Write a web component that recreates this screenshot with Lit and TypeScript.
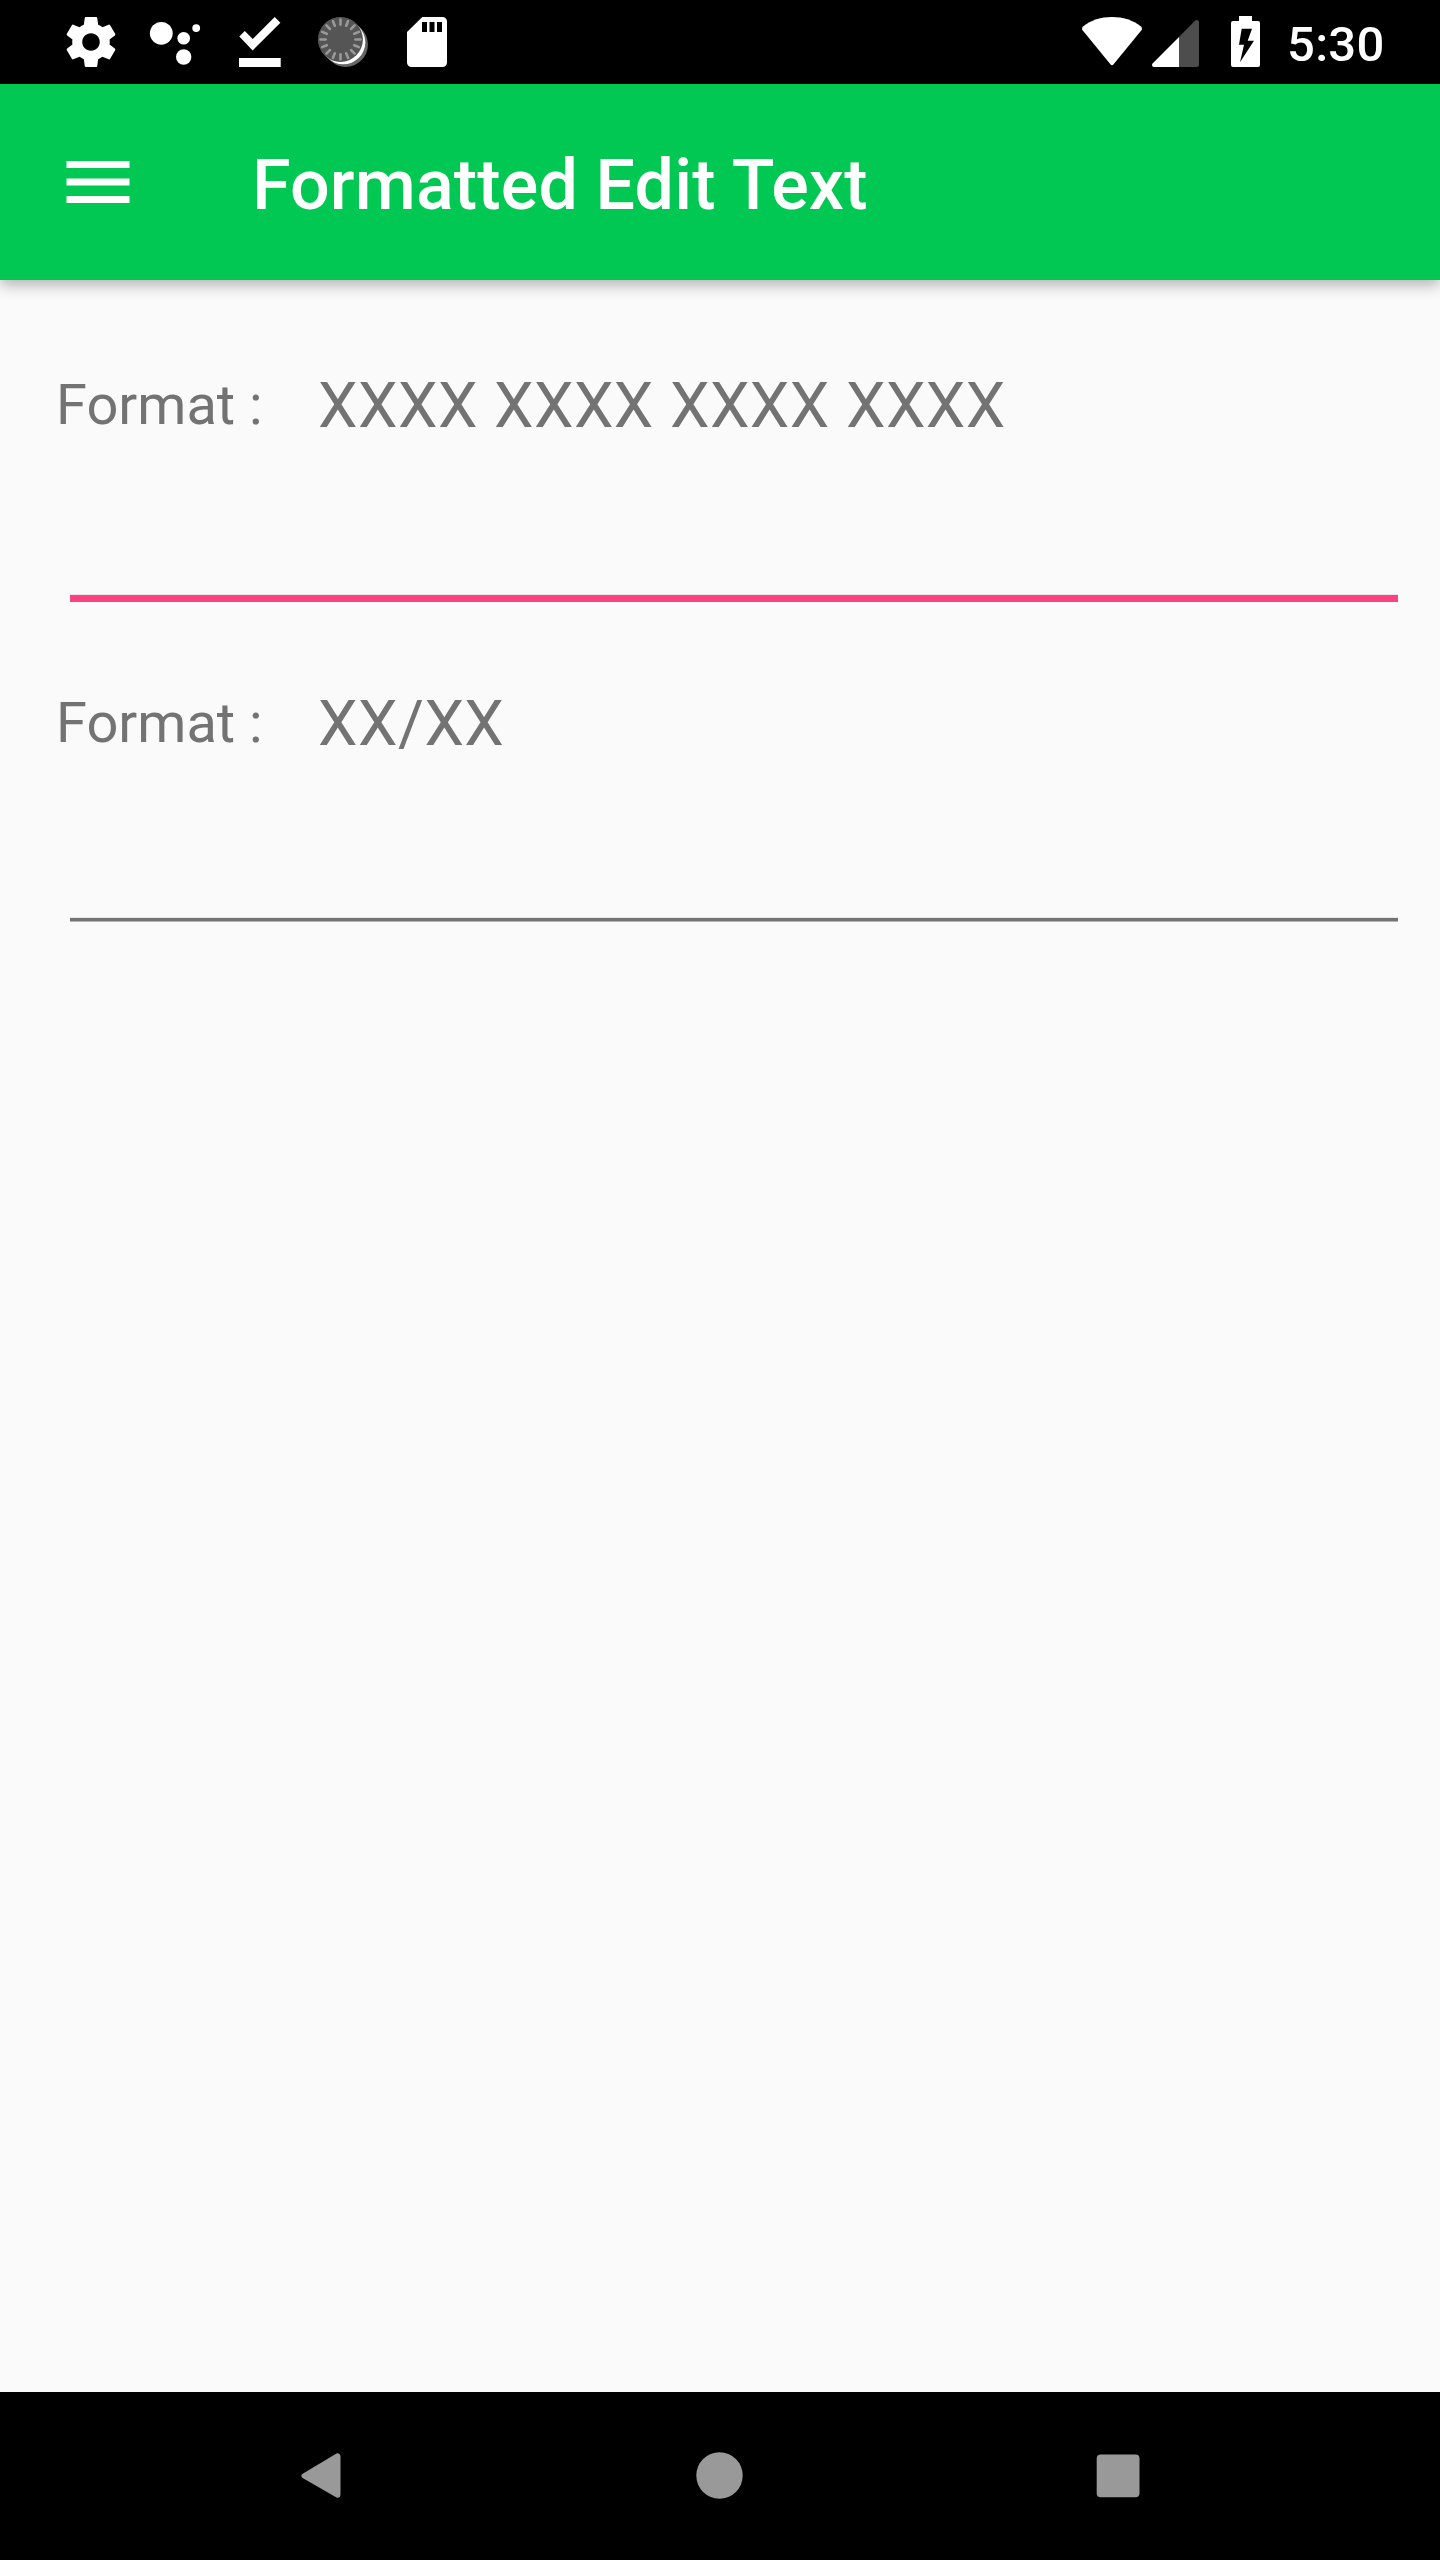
import { LitElement, html, css, svg } from "lit";
import { customElement, property } from "lit/decorators.js";

const ticks = Array.from({ length: 16 }, (_, i) => i * 22.5);

@customElement("status-bar")
class StatusBar extends LitElement {
  static styles = css`
    :host {
      display: flex;
      justify-content: space-between;
      height: 84px;
      background: #000;
      color: #fff;
    }
    .group {
      display: flex;
      height: 84px;
    }
    .notifications {
      padding-left: 49px;
    }
    .system {
      padding-right: 56px;
    }
    svg {
      display: block;
      fill: #fff;
    }
    .signal {
      margin-left: 10px;
    }
    .battery {
      margin-left: 32px;
    }
    .time {
      margin-left: 27px;
      width: 97px;
      white-space: nowrap;
      font-size: 49px;
      font-weight: 500;
      line-height: 90px;
      letter-spacing: 0.3px;
    }
  `;

  render() {
    return html`
      <div class="group notifications">
        <svg width="84" height="84" viewBox="0 0 84 84">
          <path
            transform="translate(12 12) scale(2.5)"
            d="M19.43 12.98c.04-.32.07-.64.07-.98s-.03-.66-.07-.98l2.11-1.65c.19-.15.24-.42.12-.64l-2-3.46c-.12-.22-.39-.3-.61-.22l-2.49 1c-.52-.4-1.08-.73-1.69-.98l-.38-2.65C14.46 2.18 14.25 2 14 2h-4c-.25 0-.46.18-.49.42l-.38 2.65c-.61.25-1.17.59-1.69.98l-2.49-1c-.23-.09-.49 0-.61.22l-2 3.46c-.13.22-.07.49.12.64l2.11 1.65c-.04.32-.07.65-.07.98s.03.66.07.98l-2.11 1.65c-.19.15-.24.42-.12.64l2 3.46c.12.22.39.3.61.22l2.49-1c.52.4 1.08.73 1.69.98l.38 2.65c.03.24.24.42.49.42h4c.25 0 .46-.18.49-.42l.38-2.65c.61-.25 1.17-.59 1.69-.98l2.49 1c.23.09.49 0 .61-.22l2-3.46c.12-.22.07-.49-.12-.64l-2.11-1.65zM12 15.5c-1.93 0-3.5-1.57-3.5-3.5s1.57-3.5 3.5-3.5 3.5 1.57 3.5 3.5-1.57 3.5-3.5 3.5z"
          />
        </svg>
        <svg width="84" height="84" viewBox="0 0 84 84">
          <circle cx="28.3" cy="33.3" r="11.4" />
          <circle cx="50.7" cy="38.3" r="6.3" />
          <circle cx="63.2" cy="28.1" r="3.9" />
          <circle cx="50.7" cy="57" r="7.7" />
        </svg>
        <svg width="84" height="84" viewBox="0 0 84 84">
          <path d="M22.3 36.5L27.8 31L35.7 39L57.7 17L63.4 22.7L35.7 50.4ZM22 58h41.7v9H22Z" />
        </svg>
        <svg width="84" height="84" viewBox="0 0 84 84">
          <path d="M39.5 39.5L44.6 44.6" stroke="#666" stroke-width="44.6" stroke-linecap="round" />
          <circle cx="42.3" cy="42.3" r="22" />
          <circle cx="39.5" cy="39.5" r="22.4" fill="#555" />
          ${ticks.map(
            (a) => svg`<path d="M39.5 19.6v5" stroke="#999" stroke-width="2.6" stroke-linecap="round" transform="rotate(${a} 39.5 39.5)" />`
          )}
        </svg>
        <svg width="84" height="84" viewBox="0 0 84 84">
          <path
            fill-rule="evenodd"
            d="M37.3 17H57.5a4.5 4.5 0 0 1 4.5 4.5V62.5a4.5 4.5 0 0 1-4.5 4.5H26.5a4.5 4.5 0 0 1-4.5-4.5V32ZM37 22v10h5V22ZM44.5 22v10h5V22ZM52 22v10h5V22Z"
          />
        </svg>
      </div>
      <div class="group system">
        <svg width="60" height="84" viewBox="0 0 60 84">
          <path d="M1 26.5C9 20 19 17 30 17S51 20 59 26.5Q60.6 28 59.4 30.3L31.6 64.3Q30 66 28.4 64.3L.6 30.3Q-.6 28 1 26.5Z" />
        </svg>
        <svg class="signal" width="47" height="84" viewBox="0 0 47 84">
          <path fill="#4d4d4d" d="M27 37L42.5 21.2Q44 19.5 46 20.2Q47 20.6 47 22.5V64.5Q47 67 44.5 67H27Z" />
          <path d="M27 37V67H2Q0 67 0 65Q0 64 .8 63.2Z" />
        </svg>
        <svg class="battery" width="29" height="84" viewBox="0 0 29 84">
          <path
            fill-rule="evenodd"
            d="M8 16H21V21H27Q29 21 29 23V65Q29 67 27 67H2Q0 67 0 65V23Q0 21 2 21H8ZM10.7 28.7L8 44.7H13L9 62.3L23 40.7H16.7L21 28.7Z"
          />
        </svg>
        <span class="time">5:30</span>
      </div>
    `;
  }
}

@customElement("format-field")
class FormatField extends LitElement {
  @property() mask = "";
  @property({ type: Boolean }) active = false;

  static styles = css`
    :host {
      display: block;
      height: 318px;
    }
    .caption {
      display: flex;
      align-items: flex-start;
      height: 74px;
      color: #737373;
    }
    .label {
      width: 262px;
      font-size: 56px;
      line-height: 74px;
      white-space: pre;
    }
    .mask {
      font-size: 63px;
      line-height: 76px;
      white-space: nowrap;
      letter-spacing: 0.47px;
    }
    .entry {
      display: flex;
      flex-direction: column;
      height: 148px;
      margin: 14px 42px 0 14px;
    }
    .entry.active {
      height: 146px;
    }
    .value {
      flex: 1;
      min-height: 0;
      width: 100%;
      box-sizing: border-box;
      border: 0;
      padding: 0;
      outline: 0;
      background: none;
      font: 63px Roboto, sans-serif;
    }
    .underline {
      height: 3px;
      background: #737373;
      border-top: 1px solid #e6e6e6;
      border-bottom: 1px solid #b5b5b5;
    }
    .active .underline {
      height: 7px;
      background: #ff4081;
      border-bottom: 0;
    }
  `;

  render() {
    return html`
      <div class="caption">
        <span class="label">Format :</span>
        <span class="mask">${this.mask}</span>
      </div>
      <div class="entry ${this.active ? "active" : ""}">
        <input class="value" type="text" />
        <div class="underline"></div>
      </div>
    `;
  }
}

@customElement("app-root")
class AppRoot extends LitElement {
  static styles = css`
    :host {
      display: flex;
      flex-direction: column;
      width: 1440px;
      height: 2560px;
      overflow: hidden;
      background: #fafafa;
      font-family: Roboto, sans-serif;
    }
    .toolbar {
      display: flex;
      align-items: center;
      height: 196px;
      box-sizing: border-box;
      padding-left: 56px;
      background: #00c853;
      color: #fff;
      box-shadow: 0 5px 14px rgba(0, 0, 0, 0.29);
    }
    .menu {
      display: block;
      fill: #fff;
    }
    .title {
      margin: 6px 0 0 112px;
      font-size: 70px;
      font-weight: 500;
      line-height: 84px;
      letter-spacing: 0.16px;
      white-space: nowrap;
    }
    .content {
      flex: 1;
      padding: 88px 0 0 56px;
    }
    .navigation {
      display: flex;
      align-items: center;
      justify-content: center;
      gap: 315px;
      height: 168px;
      background: #000;
    }
    .navigation svg {
      display: block;
      fill: #999;
    }
  `;

  render() {
    return html`
      <status-bar></status-bar>
      <header class="toolbar">
        <svg class="menu" width="84" height="84" viewBox="0 0 24 24">
          <path d="M3 18h18v-2H3v2zm0-5h18v-2H3v2zm0-7v2h18V6H3z" />
        </svg>
        <div class="title">Formatted Edit Text</div>
      </header>
      <main class="content">
        <format-field mask="XXXX XXXX XXXX XXXX" active></format-field>
        <format-field mask="XX/XX"></format-field>
      </main>
      <nav class="navigation">
        <svg width="84" height="84" viewBox="0 0 84 84">
          <path d="M24.5 39.2L57.5 19.4Q61 18.5 61.5 22V60.5Q61 64.5 57.5 63.5L24.5 44.5Q20 41.8 24.5 39.2Z" />
        </svg>
        <svg width="84" height="84" viewBox="0 0 84 84">
          <circle cx="41.5" cy="41.5" r="23.2" />
        </svg>
        <svg width="84" height="84" viewBox="0 0 84 84">
          <rect x="19.7" y="20.5" width="42.8" height="42.8" rx="4" />
        </svg>
      </nav>
    `;
  }
}
